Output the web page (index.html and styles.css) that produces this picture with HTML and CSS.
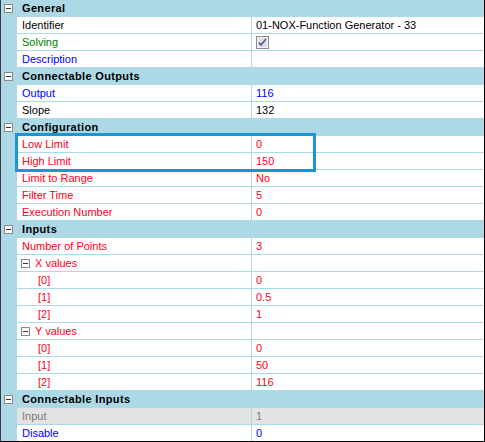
FILE: index.html
```html
<!DOCTYPE html>
<html>
<head>
<meta charset="utf-8">
<link rel="stylesheet" href="styles.css">
</head>
<body>
<div class="grid">
  <div class="hdr"><span class="tog"></span><span class="ht">General</span></div>
  <div class="row"><div class="n">Identifier</div><div class="v">01-NOX-Function Generator - 33</div></div>
  <div class="row"><div class="n green">Solving</div><div class="v"><svg class="chk" width="13" height="13" viewBox="0 0 13 13"><rect x="0.5" y="0.5" width="12" height="12" fill="#e4e4e4" stroke="#8c8c8c"/><rect x="1.5" y="1.5" width="10" height="10" fill="#dedede" stroke="#f4f4f4"/><path d="M3 6.5 L5 9 L10 3" fill="none" stroke="#4c5d9c" stroke-width="1.6"/></svg></div></div>
  <div class="row"><div class="n blue">Description</div><div class="v"></div></div>
  <div class="hdr"><span class="tog"></span><span class="ht">Connectable Outputs</span></div>
  <div class="row"><div class="n blue">Output</div><div class="v blue">116</div></div>
  <div class="row"><div class="n">Slope</div><div class="v">132</div></div>
  <div class="hdr"><span class="tog"></span><span class="ht">Configuration</span></div>
  <div class="row"><div class="n red">Low Limit</div><div class="v red">0</div></div>
  <div class="row"><div class="n red">High Limit</div><div class="v red">150</div></div>
  <div class="row"><div class="n red">Limit to Range</div><div class="v red">No</div></div>
  <div class="row"><div class="n red">Filter Time</div><div class="v red">5</div></div>
  <div class="row"><div class="n red">Execution Number</div><div class="v red">0</div></div>
  <div class="hdr"><span class="tog"></span><span class="ht">Inputs</span></div>
  <div class="row"><div class="n red">Number of Points</div><div class="v red">3</div></div>
  <div class="row"><div class="n red sub"><span class="tog"></span>X values</div><div class="v"></div></div>
  <div class="row"><div class="n red idx">[0]</div><div class="v red">0</div></div>
  <div class="row"><div class="n red idx">[1]</div><div class="v red">0.5</div></div>
  <div class="row"><div class="n red idx">[2]</div><div class="v red">1</div></div>
  <div class="row"><div class="n red sub"><span class="tog"></span>Y values</div><div class="v"></div></div>
  <div class="row"><div class="n red idx">[0]</div><div class="v red">0</div></div>
  <div class="row"><div class="n red idx">[1]</div><div class="v red">50</div></div>
  <div class="row"><div class="n red idx">[2]</div><div class="v red">116</div></div>
  <div class="hdr"><span class="tog"></span><span class="ht">Connectable Inputs</span></div>
  <div class="row dis"><div class="n">Input</div><div class="v">1</div></div>
  <div class="row"><div class="n blue">Disable</div><div class="v blue">0</div></div>
  <div class="hl"></div>
</div>
</body>
</html>
```
FILE: styles.css
```css
html, body {
  margin: 0;
  padding: 0;
  background: #ffffff;
}
.grid {
  position: relative;
  width: 483px;
  display: flex;
  flex-direction: column;
  gap: 1px;
  background: #add8e6;
  border-left: 1px solid #3a3a3a;
  border-right: 1px solid #000000;
  border-bottom: 1px solid #000000;
  font-family: "Liberation Sans", Arial, sans-serif;
  font-size: 11px;
  color: #000;
}
.row {
  display: grid;
  grid-template-columns: 234px 232px;
  column-gap: 1px;
  margin-left: 16px;
  height: 16px;
}
.n, .v {
  background: #ffffff;
  display: flex;
  align-items: center;
  padding-left: 5px;
  white-space: nowrap;
  overflow: hidden;
  line-height: 16px;
}
.v { padding-left: 4px; }
.hdr {
  height: 16px;
  display: flex;
  align-items: center;
  padding-left: 3px;
}
.ht {
  font-weight: bold;
  margin-left: 9px;
  line-height: 16px;
  letter-spacing: 0.35px;
}
.tog {
  width: 9px;
  height: 9px;
  box-sizing: border-box;
  border: 1px solid #8a8a8a;
  background: #ffffff;
  position: relative;
  flex: none;
}
.tog::after {
  content: "";
  position: absolute;
  left: 1px;
  right: 1px;
  top: 3px;
  height: 1px;
  background: #333333;
}
.sub { padding-left: 4px; }
.sub .tog { margin-right: 5px; }
.idx { padding-left: 21px; }
.red { color: #ff0022; }
.blue { color: #0000ff; }
.green { color: #008000; }
.dis .n, .dis .v {
  background: #e3e3e3;
  color: #7a7a7a;
}
.chk { display: block; }
.hl {
  position: absolute;
  left: 14px;
  top: 133px;
  width: 301px;
  height: 39px;
  box-sizing: border-box;
  border: 3px solid #1896d5;
}
```
